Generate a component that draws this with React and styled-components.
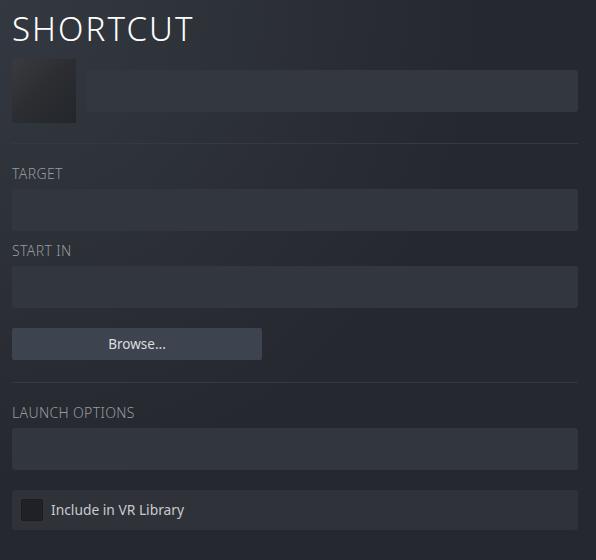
import React from "react";
import styled, { createGlobalStyle } from "styled-components";

const Global = createGlobalStyle`
  html, body { margin: 0; padding: 0; height: 100%; }
  body {
    background: #25282e;
    font-family: "Noto Sans", "Open Sans", Arial, sans-serif;
  }
  #root { min-height: 100%; }
`;

const Dialog = styled.div`
  width: 596px;
  height: 560px;
  box-sizing: border-box;
  padding: 0 18px 0 12px;
  background: radial-gradient(circle at top left, rgba(74, 81, 92, 0.4) 0%, rgba(75, 81, 92, 0) 60%), #25282e;
  overflow: hidden;
`;

const Title = styled.h1`
  margin: 0;
  padding-top: 9px;
  font-family: "Noto Sans", "Open Sans", sans-serif;
  font-weight: 300;
  font-size: 33px;
  line-height: 40px;
  letter-spacing: 2.1px;
  color: #ffffff;
`;

const HeaderRow = styled.div`
  display: flex;
  align-items: center;
  gap: 10px;
  margin-top: 10px;
`;

const Thumb = styled.div`
  width: 64px;
  height: 64px;
  flex: none;
  background: linear-gradient(135deg, #3a3b3e 0%, #2c2e32 45%, #23262b 100%);
`;

const TextField = styled.div`
  flex: 1;
  height: 42px;
  border-radius: 3px;
  background: #33373f;
`;

const Separator = styled.div`
  height: 1px;
  background: #353942;
  margin-top: ${(p) => p.$top}px;
`;

const Label = styled.div`
  margin-top: ${(p) => p.$top}px;
  height: 20px;
  font-size: 14px;
  font-weight: 300;
  line-height: 20px;
  letter-spacing: 0.35px;
  color: #979aa0;
  text-transform: uppercase;
`;

const Field = styled.div`
  margin-top: 5px;
  height: 42px;
  border-radius: 3px;
  background: #32363e;
`;

const Button = styled.button`
  display: block;
  margin-top: 20px;
  width: 250px;
  height: 32px;
  border: none;
  border-radius: 2px;
  background: #3d4450;
  color: #dcdedf;
  font-family: "Noto Sans", "Open Sans", sans-serif;
  font-size: 13.5px;
  padding: 0;
  cursor: pointer;
`;

const CheckRow = styled.label`
  display: flex;
  align-items: center;
  gap: 8px;
  margin-top: 20px;
  height: 40px;
  box-sizing: border-box;
  padding: 0 9px 1px;
  border-radius: 3px;
  background: #2f3239;
  color: #c9cbce;
  font-size: 13.8px;
`;

const Box = styled.span`
  width: 22px;
  height: 22px;
  box-sizing: border-box;
  border-radius: 2px;
  background: #1f2126;
  border: 1px solid #1a1c20;
  flex: none;
  margin-top: 1px;
`;

export default function App() {
  return (
    <>
      <Global />
      <Dialog>
        <Title>SHORTCUT</Title>
        <HeaderRow>
          <Thumb />
          <TextField />
        </HeaderRow>
        <Separator $top={20} />
        <Label $top={20}>Target</Label>
        <Field />
        <Label $top={10}>Start In</Label>
        <Field />
        <Button>Browse...</Button>
        <Separator $top={22} />
        <Label $top={20}>Launch Options</Label>
        <Field />
        <CheckRow>
          <Box />
          Include in VR Library
        </CheckRow>
      </Dialog>
    </>
  );
}
